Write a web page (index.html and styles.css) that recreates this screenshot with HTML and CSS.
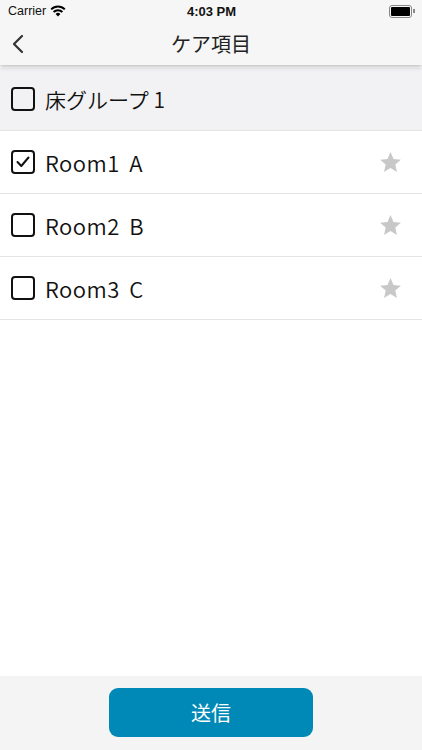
FILE: index.html
```html
<!DOCTYPE html>
<html>
<head>
    <title>ケア項目</title>
    <link rel="stylesheet" href="styles.css">
</head>
<body>
    <div class="app">
        <header class="top">
            <div class="status-bar">
                <div class="status-left">
                    Carrier
                    <svg class="wifi" width="16" height="12" viewBox="0 0 16 12">
                        <path d="M8 11.5 L5.6 9 A3.4 3.4 0 0 1 10.4 9 Z" fill="#000"/>
                        <path d="M3.6 7 A6.2 6.2 0 0 1 12.4 7" stroke="#000" stroke-width="2" fill="none"/>
                        <path d="M1.2 4.4 A9.6 9.6 0 0 1 14.8 4.4" stroke="#000" stroke-width="2" fill="none"/>
                    </svg>
                </div>
                <div class="status-time">4:03 PM</div>
                <div class="status-right">
                    <div class="battery"><div class="battery-level"></div></div>
                    <div class="battery-tip"></div>
                </div>
            </div>
            <nav class="nav-bar">
                <button class="back">
                    <svg width="14" height="20" viewBox="0 0 14 20">
                        <path d="M11 2 L3 10 L11 18" stroke="#333" stroke-width="2.2" fill="none" stroke-linecap="round" stroke-linejoin="round"/>
                    </svg>
                </button>
                <h1 class="title">ケア項目</h1>
            </nav>
        </header>

        <main class="list">
            <div class="row group-row">
                <span class="check"></span>
                <span class="label group-label">床グループ 1</span>
            </div>
            <div class="row">
                <span class="check checked">
                    <svg width="18" height="18" viewBox="0 0 18 18">
                        <path d="M3.5 9 L7.3 13 L14.5 4.5" stroke="#111" stroke-width="2" fill="none" stroke-linecap="round" stroke-linejoin="round"/>
                    </svg>
                </span>
                <span class="label">Room1 A</span>
                <svg class="star" width="25" height="25" viewBox="0 0 24 24">
                    <path d="M12 2 L14.9 8.6 L22 9.3 L16.6 14 L18.2 21 L12 17.3 L5.8 21 L7.4 14 L2 9.3 L9.1 8.6 Z" fill="#c8c8c8"/>
                </svg>
            </div>
            <div class="row">
                <span class="check"></span>
                <span class="label">Room2 B</span>
                <svg class="star" width="25" height="25" viewBox="0 0 24 24">
                    <path d="M12 2 L14.9 8.6 L22 9.3 L16.6 14 L18.2 21 L12 17.3 L5.8 21 L7.4 14 L2 9.3 L9.1 8.6 Z" fill="#c8c8c8"/>
                </svg>
            </div>
            <div class="row">
                <span class="check"></span>
                <span class="label">Room3 C</span>
                <svg class="star" width="25" height="25" viewBox="0 0 24 24">
                    <path d="M12 2 L14.9 8.6 L22 9.3 L16.6 14 L18.2 21 L12 17.3 L5.8 21 L7.4 14 L2 9.3 L9.1 8.6 Z" fill="#c8c8c8"/>
                </svg>
            </div>
        </main>

        <footer class="bottom-bar">
            <button class="send">送信</button>
        </footer>
    </div>
</body>
</html>
```

FILE: styles.css
```css
body {
    margin: 0;
    font-family: "Noto Sans CJK JP", "Noto Sans", sans-serif;
    color: #111;
    background: #fff;
}

.app {
    width: 422px;
    height: 750px;
    display: flex;
    flex-direction: column;
    overflow: hidden;
}

.top {
    background: #f6f6f6;
    box-shadow: 0 2px 4px rgba(0,0,0,0.25);
    position: relative;
    z-index: 1;
}

.status-bar {
    height: 22px;
    display: flex;
    align-items: center;
    justify-content: space-between;
    padding: 0 7px 0 8px;
    font-family: "Liberation Sans", Arial, sans-serif;
    font-size: 12.5px;
}

.status-left {
    display: flex;
    align-items: center;
    gap: 4px;
    width: 80px;
}

.status-time {
    font-weight: bold;
    font-size: 13px;
}

.status-right {
    width: 80px;
    display: flex;
    justify-content: flex-end;
    align-items: center;
}

.battery {
    width: 19px;
    height: 9px;
    border: 1px solid #888;
    border-radius: 3px;
    padding: 1px;
}

.battery-level {
    width: 100%;
    height: 100%;
    background: #000;
    border-radius: 1px;
}

.battery-tip {
    width: 1.5px;
    height: 4px;
    background: #888;
    margin-left: 1px;
}

.nav-bar {
    height: 43px;
    display: flex;
    align-items: center;
    justify-content: center;
    position: relative;
}

.back {
    position: absolute;
    left: 11px;
    top: 12px;
    border: none;
    background: none;
    padding: 0;
    display: flex;
}

.title {
    margin: 0;
    font-size: 20px;
    font-weight: normal;
    color: #222;
}

.list {
    flex: 1;
}

.row {
    height: 62px;
    display: flex;
    align-items: center;
    padding: 0 19px 0 11px;
    border-bottom: 1px solid #e4e4e4;
}

.group-row {
    background: #f2f2f4;
    margin-top: 3px;
}

.check {
    width: 20px;
    height: 20px;
    border: 2px solid #111;
    border-radius: 4px;
    display: flex;
    align-items: center;
    justify-content: center;
    flex-shrink: 0;
}

.label {
    margin-left: 10px;
    font-size: 22px;
    font-weight: 350;
    letter-spacing: 0.5px;
    word-spacing: 4px;
    flex: 1;
}

.group-label {
    font-size: 21px;
    letter-spacing: 0;
    word-spacing: 0;
}

.star {
    flex-shrink: 0;
}

.bottom-bar {
    height: 74px;
    background: #f4f4f4;
    display: flex;
    justify-content: center;
    padding-top: 12px;
    box-sizing: border-box;
}

.send {
    width: 204px;
    height: 49px;
    border: none;
    border-radius: 9px;
    background: #0088b7;
    color: #fff;
    font-family: "Noto Sans CJK JP", sans-serif;
    font-size: 20px;
}
```
